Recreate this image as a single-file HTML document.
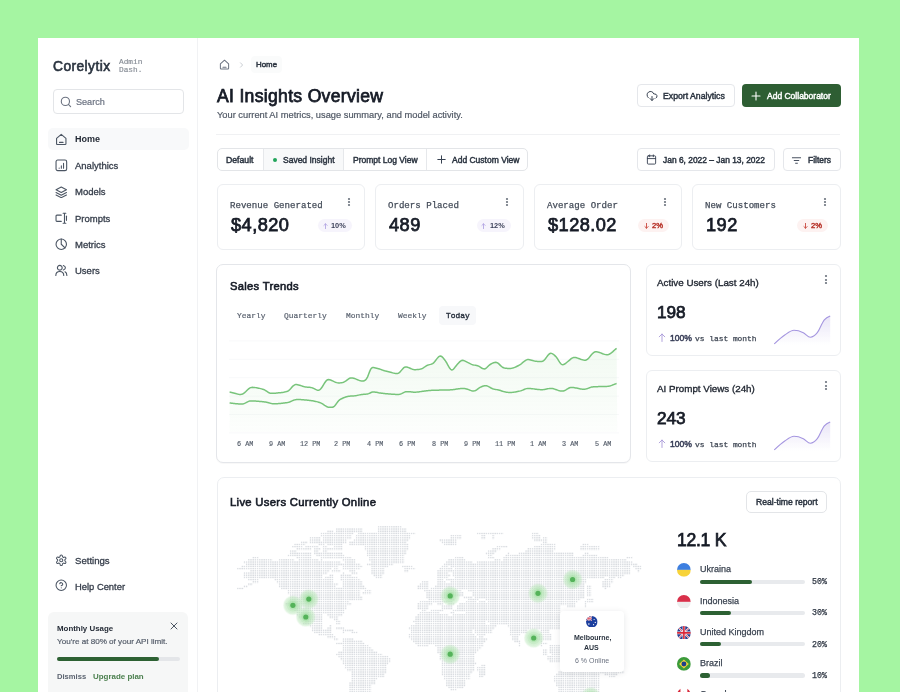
<!DOCTYPE html>
<html><head><meta charset="utf-8">
<style>
*{box-sizing:border-box;margin:0;padding:0}
html,body{width:900px;height:692px;overflow:hidden;background:#a5f5a2;font-family:"Liberation Sans",sans-serif}
.t{position:absolute;white-space:nowrap;line-height:1;will-change:transform}
.r{position:absolute}
svg.i{position:absolute;fill:none;stroke-linecap:round;stroke-linejoin:round}
</style></head>
<body>
<div class="r" style="left:38.00px;top:38.00px;width:821.00px;height:654.00px;background:#ffffff;border-radius:0px;"></div>
<div class="r" style="left:197.00px;top:38.00px;width:1.00px;height:654.00px;background:#f1f2f4;border-radius:0px;"></div>
<div class="t" style="left:52.70px;top:59.53px;font-size:13.8px;font-weight:normal;color:#2b3440;font-family:'Liberation Sans',sans-serif;-webkit-text-stroke:0.75px #2b3440;-webkit-text-stroke:0.6px #2b3440;letter-spacing:0.42px">Corelytix</div>
<div class="t" style="left:119px;top:57.8px;font-size:7.8px;line-height:8.0px;color:#868c95;-webkit-text-stroke:0.15px #868c95;font-family:'Liberation Mono',monospace">Admin<br>Dash.</div>
<div class="r" style="left:52.50px;top:88.50px;width:131.00px;height:25.00px;background:#fff;border:1px solid #e3e5e8;border-radius:4px;"></div>
<svg class="i" style="left:60px;top:96px" width="12" height="12" viewBox="0 0 12 12" stroke="#6b7280" stroke-width="1.1"><circle cx="5.4" cy="5.4" r="4.1"/><path d="M8.4 8.4 L10.6 10.6"/></svg>
<div class="t" style="left:76.40px;top:97.60px;font-size:9.1px;font-weight:normal;color:#6b7280;font-family:'Liberation Sans',sans-serif;-webkit-text-stroke:0.2px #6b7280">Search</div>
<div class="r" style="left:47.50px;top:128.00px;width:141.00px;height:22.00px;background:#f8f9fa;border-radius:5px;"></div>
<svg class="i" style="left:55.3px;top:133.0px" width="12.5" height="12.5" viewBox="0 0 12 12" stroke="#4b5563" stroke-width="1.05"><path d="M1.5 5.2 L6 1.3 L10.5 5.2 V10.2 Q10.5 11 9.7 11 H2.3 Q1.5 11 1.5 10.2 Z"/><path d="M4.3 9 H7.7"/></svg>
<div class="t" style="left:75.20px;top:135.04px;font-size:9.0px;font-weight:bold;color:#232a35;font-family:'Liberation Sans',sans-serif;">Home</div>
<svg class="i" style="left:55.3px;top:159.3px" width="12.5" height="12.5" viewBox="0 0 12 12" stroke="#4b5563" stroke-width="1.05"><rect x="1" y="1" width="10.2" height="10.2" rx="1.6"/><path d="M4 8.8 V8.6 M6.1 8.8 V6.6 M8.2 8.8 V4.2"/></svg>
<div class="t" style="left:75.20px;top:161.12px;font-size:9.5px;font-weight:normal;color:#353d4a;font-family:'Liberation Sans',sans-serif;-webkit-text-stroke:0.3px #353d4a">Analythics</div>
<svg class="i" style="left:55.3px;top:185.5px" width="12.5" height="12.5" viewBox="0 0 12 12" stroke="#4b5563" stroke-width="1.05"><path d="M6 1 L11 3.6 L6 6.2 L1 3.6 Z"/><path d="M1 6.2 L6 8.8 L11 6.2"/><path d="M1 8.6 L6 11.2 L11 8.6"/></svg>
<div class="t" style="left:75.20px;top:187.32px;font-size:9.5px;font-weight:normal;color:#353d4a;font-family:'Liberation Sans',sans-serif;-webkit-text-stroke:0.3px #353d4a">Models</div>
<svg class="i" style="left:55.3px;top:211.8px" width="12.5" height="12.5" viewBox="0 0 12 12" stroke="#4b5563" stroke-width="1.05"><path d="M6 3 H1.8 Q1 3 1 3.8 V8.2 Q1 9 1.8 9 H6"/><path d="M7.8 1.2 H10.4 M9.1 1.2 V10.8 M7.8 10.8 H10.4"/><path d="M11 4 V8"/></svg>
<div class="t" style="left:75.20px;top:213.62px;font-size:9.5px;font-weight:normal;color:#353d4a;font-family:'Liberation Sans',sans-serif;-webkit-text-stroke:0.3px #353d4a">Prompts</div>
<svg class="i" style="left:55.3px;top:238.0px" width="12.5" height="12.5" viewBox="0 0 12 12" stroke="#4b5563" stroke-width="1.05"><circle cx="6" cy="6" r="5"/><path d="M6 1 V6 L9.6 9.5"/></svg>
<div class="t" style="left:75.20px;top:239.82px;font-size:9.5px;font-weight:normal;color:#353d4a;font-family:'Liberation Sans',sans-serif;-webkit-text-stroke:0.3px #353d4a">Metrics</div>
<svg class="i" style="left:55.3px;top:264.3px" width="12.5" height="12.5" viewBox="0 0 12 12" stroke="#4b5563" stroke-width="1.05"><circle cx="4.6" cy="3.6" r="2.3"/><path d="M0.8 11 Q0.8 7.2 4.6 7.2 Q8.4 7.2 8.4 11"/><path d="M8 1.4 Q10 2.2 10 3.6 Q10 5 8 5.8"/><path d="M9.6 7.4 Q11.4 8.3 11.4 11"/></svg>
<div class="t" style="left:75.20px;top:266.12px;font-size:9.5px;font-weight:normal;color:#353d4a;font-family:'Liberation Sans',sans-serif;-webkit-text-stroke:0.3px #353d4a">Users</div>
<svg class="i" style="left:55px;top:554.2px" width="12.5" height="12.5" viewBox="0 0 24 24" stroke="#4b5563" stroke-width="2"><path d="M12.22 2h-.44a2 2 0 0 0-2 2v.18a2 2 0 0 1-1 1.73l-.43.25a2 2 0 0 1-2 0l-.15-.08a2 2 0 0 0-2.73.73l-.22.38a2 2 0 0 0 .73 2.73l.15.1a2 2 0 0 1 1 1.72v.51a2 2 0 0 1-1 1.74l-.15.09a2 2 0 0 0-.73 2.73l.22.38a2 2 0 0 0 2.73.73l.15-.08a2 2 0 0 1 2 0l.43.25a2 2 0 0 1 1 1.73V20a2 2 0 0 0 2 2h.44a2 2 0 0 0 2-2v-.18a2 2 0 0 1 1-1.73l.43-.25a2 2 0 0 1 2 0l.15.08a2 2 0 0 0 2.73-.73l.22-.39a2 2 0 0 0-.73-2.73l-.15-.08a2 2 0 0 1-1-1.74v-.5a2 2 0 0 1 1-1.74l.15-.09a2 2 0 0 0 .73-2.73l-.22-.38a2 2 0 0 0-2.73-.73l-.15.08a2 2 0 0 1-2 0l-.43-.25a2 2 0 0 1-1-1.73V4a2 2 0 0 0-2-2z"/><circle cx="12" cy="12" r="3"/></svg>
<div class="t" style="left:75.20px;top:556.18px;font-size:9.6px;font-weight:normal;color:#353d4a;font-family:'Liberation Sans',sans-serif;-webkit-text-stroke:0.3px #353d4a">Settings</div>
<svg class="i" style="left:55px;top:579.4px" width="12.5" height="12.5" viewBox="0 0 24 24" stroke="#4b5563" stroke-width="2"><circle cx="12" cy="12" r="10"/><path d="M9.09 9a3 3 0 0 1 5.83 1c0 2-3 3-3 3"/><path d="M12 17h.01"/></svg>
<div class="t" style="left:75.20px;top:581.56px;font-size:9.4px;font-weight:normal;color:#353d4a;font-family:'Liberation Sans',sans-serif;-webkit-text-stroke:0.3px #353d4a">Help Center</div>
<div class="r" style="left:48.00px;top:611.50px;width:140.00px;height:88.50px;background:#f6f7f7;border-radius:6px;"></div>
<div class="t" style="left:57.00px;top:624.52px;font-size:7.9px;font-weight:bold;color:#262d38;font-family:'Liberation Sans',sans-serif;">Monthly Usage</div>
<svg class="i" style="left:170px;top:622px" width="8" height="8" viewBox="0 0 8 8" stroke="#4b5563" stroke-width="1"><path d="M1 1 L7 7 M7 1 L1 7"/></svg>
<div class="t" style="left:57.00px;top:638.44px;font-size:8.1px;font-weight:normal;color:#555d6a;font-family:'Liberation Sans',sans-serif;-webkit-text-stroke:0.2px #555d6a">You're at 80% of your API limit.</div>
<div class="r" style="left:57.00px;top:656.60px;width:122.50px;height:4.20px;background:#e4e6e9;border-radius:3px;"></div>
<div class="r" style="left:57.00px;top:656.60px;width:102.00px;height:4.20px;background:#2d6133;border-radius:3px;"></div>
<div class="t" style="left:57.00px;top:673.06px;font-size:7.6px;font-weight:bold;color:#5b6370;font-family:'Liberation Sans',sans-serif;">Dismiss</div>
<div class="t" style="left:93.30px;top:672.90px;font-size:7.95px;font-weight:bold;color:#4b7f4e;font-family:'Liberation Sans',sans-serif;">Upgrade plan</div>
<svg class="i" style="left:218.5px;top:58.5px" width="11" height="11" viewBox="0 0 12 12" stroke="#6b7280" stroke-width="1.1"><path d="M1.5 5.2 L6 1.3 L10.5 5.2 V10.2 Q10.5 11 9.7 11 H2.3 Q1.5 11 1.5 10.2 Z"/><path d="M4.3 9 H7.7"/></svg>
<svg class="i" style="left:239px;top:61.5px" width="5" height="6" viewBox="0 0 5 6" stroke="#c4c8ce" stroke-width="0.9"><path d="M1.5 0.8 L3.6 3 L1.5 5.2"/></svg>
<div class="r" style="left:250.50px;top:56.00px;width:31.00px;height:17.00px;background:#fafbfb;border-radius:4px;"></div>
<div class="t" style="left:255.60px;top:60.92px;font-size:7.9px;font-weight:normal;color:#2b3440;font-family:'Liberation Sans',sans-serif;-webkit-text-stroke:0.45px #2b3440;">Home</div>
<div class="t" style="left:216.60px;top:87.56px;font-size:17.6px;font-weight:normal;color:#161b26;font-family:'Liberation Sans',sans-serif;-webkit-text-stroke:0.75px #161b26;letter-spacing:0.3px">AI Insights Overview</div>
<div class="t" style="left:216.60px;top:110.51px;font-size:9.3px;font-weight:normal;color:#505865;font-family:'Liberation Sans',sans-serif;-webkit-text-stroke:0.2px #505865">Your current AI metrics, usage summary, and model activity.</div>
<div class="r" style="left:216.00px;top:133.50px;width:624.00px;height:1.00px;background:#f0f1f3;border-radius:0px;"></div>
<div class="r" style="left:637.30px;top:84.30px;width:97.30px;height:22.50px;background:#fff;border:1px solid #e5e7eb;border-radius:4px;"></div>
<svg class="i" style="left:646px;top:89.5px" width="12" height="12" viewBox="0 0 24 24" stroke="#374151" stroke-width="2"><path d="M12 13v8l-4-4"/><path d="m12 21 4-4"/><path d="M4.393 15.269A7 7 0 1 1 15.71 8h1.79a4.5 4.5 0 0 1 2.436 8.284"/></svg>
<div class="t" style="left:662.50px;top:91.67px;font-size:8.7px;font-weight:normal;color:#2b3440;font-family:'Liberation Sans',sans-serif;-webkit-text-stroke:0.45px #2b3440;">Export Analytics</div>
<div class="r" style="left:741.70px;top:84.30px;width:99.10px;height:22.50px;background:#2e5e33;border-radius:4px;"></div>
<svg class="i" style="left:751px;top:90.5px" width="10" height="10" viewBox="0 0 10 10" stroke="#ffffff" stroke-width="1.1"><path d="M5 1 V9 M1 5 H9"/></svg>
<div class="t" style="left:767.00px;top:91.76px;font-size:8.5px;font-weight:normal;color:#ffffff;font-family:'Liberation Sans',sans-serif;-webkit-text-stroke:0.45px #ffffff;">Add Collaborator</div>
<div class="r" style="left:216.60px;top:148.40px;width:311.90px;height:22.60px;background:#fff;border:1px solid #e3e5e8;border-radius:5px;overflow:hidden"></div>
<div class="r" style="left:263.00px;top:149.40px;width:80.40px;height:20.60px;background:#f8f9fa;border-radius:0px;"></div>
<div class="r" style="left:263.00px;top:149.40px;width:1.00px;height:20.60px;background:#e6e8eb;border-radius:0px;"></div>
<div class="r" style="left:343.40px;top:149.40px;width:1.00px;height:20.60px;background:#e6e8eb;border-radius:0px;"></div>
<div class="r" style="left:426.30px;top:149.40px;width:1.00px;height:20.60px;background:#e6e8eb;border-radius:0px;"></div>
<div class="t" style="left:225.60px;top:155.77px;font-size:8.7px;font-weight:normal;color:#2b3440;font-family:'Liberation Sans',sans-serif;-webkit-text-stroke:0.45px #2b3440;">Default</div>
<div class="r" style="left:272.80px;top:157.50px;width:4.00px;height:4.00px;background:#22a55a;border-radius:2px;"></div>
<div class="t" style="left:282.50px;top:155.86px;font-size:8.5px;font-weight:normal;color:#2b3440;font-family:'Liberation Sans',sans-serif;-webkit-text-stroke:0.45px #2b3440;">Saved Insight</div>
<div class="t" style="left:352.90px;top:155.86px;font-size:8.5px;font-weight:normal;color:#2b3440;font-family:'Liberation Sans',sans-serif;-webkit-text-stroke:0.45px #2b3440;">Prompt Log View</div>
<svg class="i" style="left:436.5px;top:155px" width="9" height="9" viewBox="0 0 9 9" stroke="#374151" stroke-width="1"><path d="M4.5 0.8 V8.2 M0.8 4.5 H8.2"/></svg>
<div class="t" style="left:451.70px;top:155.86px;font-size:8.5px;font-weight:normal;color:#2b3440;font-family:'Liberation Sans',sans-serif;-webkit-text-stroke:0.45px #2b3440;">Add Custom View</div>
<div class="r" style="left:637.30px;top:148.30px;width:137.70px;height:22.50px;background:#fff;border:1px solid #e5e7eb;border-radius:4px;"></div>
<svg class="i" style="left:646px;top:153.8px" width="11" height="11" viewBox="0 0 24 24" stroke="#374151" stroke-width="2"><rect x="3" y="4" width="18" height="18" rx="2"/><path d="M16 2v4M8 2v4M3 10h18"/></svg>
<div class="t" style="left:663.00px;top:155.90px;font-size:8.42px;font-weight:normal;color:#2b3440;font-family:'Liberation Sans',sans-serif;-webkit-text-stroke:0.45px #2b3440;">Jan 6, 2022 – Jan 13, 2022</div>
<div class="r" style="left:782.80px;top:148.30px;width:58.00px;height:22.50px;background:#fff;border:1px solid #e5e7eb;border-radius:4px;"></div>
<svg class="i" style="left:791px;top:154.5px" width="11" height="11" viewBox="0 0 24 24" stroke="#374151" stroke-width="2"><path d="M3 6h18M7 12h10M10 18h4"/></svg>
<div class="t" style="left:807.70px;top:155.88px;font-size:8.45px;font-weight:normal;color:#2b3440;font-family:'Liberation Sans',sans-serif;-webkit-text-stroke:0.45px #2b3440;">Filters</div>
<div class="r" style="left:216.60px;top:184.40px;width:148.40px;height:65.60px;background:#fff;border:1px solid #eceef1;border-radius:6px;"></div>
<div class="t" style="left:230.00px;top:200.60px;font-size:9.1px;font-weight:normal;color:#444c59;font-family:'Liberation Mono',monospace;-webkit-text-stroke:0.25px #444c59">Revenue Generated</div>
<div class="t" style="left:230.70px;top:216.09px;font-size:18.2px;font-weight:normal;color:#161b26;font-family:'Liberation Sans',sans-serif;-webkit-text-stroke:0.75px #161b26;letter-spacing:0.45px">$4,820</div>
<svg class="r" style="left:346.80px;top:196.50px" width="4" height="4" viewBox="0 0 4 4"><circle cx="2" cy="2" r="1.1" fill="#6b727d"/></svg>
<svg class="r" style="left:346.80px;top:199.95px" width="4" height="4" viewBox="0 0 4 4"><circle cx="2" cy="2" r="1.1" fill="#6b727d"/></svg>
<svg class="r" style="left:346.80px;top:203.40px" width="4" height="4" viewBox="0 0 4 4"><circle cx="2" cy="2" r="1.1" fill="#6b727d"/></svg>
<div class="r" style="left:318.00px;top:219.00px;width:34.00px;height:13.00px;background:#f6f4fc;border-radius:7px;"></div>
<svg class="i" style="left:322.5px;top:222.5px" width="5" height="6" viewBox="0 0 5 6" stroke="#b3a6e3" stroke-width="0.9"><path d="M2.5 5.6 V0.8 M0.9 2.4 L2.5 0.8 L4.1 2.4"/></svg>
<div class="t" style="left:331.20px;top:222.34px;font-size:7.4px;font-weight:bold;color:#3a3f58;font-family:'Liberation Sans',sans-serif;">10%</div>
<div class="r" style="left:375.00px;top:184.40px;width:148.50px;height:65.60px;background:#fff;border:1px solid #eceef1;border-radius:6px;"></div>
<div class="t" style="left:388.40px;top:200.60px;font-size:9.1px;font-weight:normal;color:#444c59;font-family:'Liberation Mono',monospace;-webkit-text-stroke:0.25px #444c59">Orders Placed</div>
<div class="t" style="left:389.10px;top:216.09px;font-size:18.2px;font-weight:normal;color:#161b26;font-family:'Liberation Sans',sans-serif;-webkit-text-stroke:0.75px #161b26;letter-spacing:0.45px">489</div>
<svg class="r" style="left:505.30px;top:196.50px" width="4" height="4" viewBox="0 0 4 4"><circle cx="2" cy="2" r="1.1" fill="#6b727d"/></svg>
<svg class="r" style="left:505.30px;top:199.95px" width="4" height="4" viewBox="0 0 4 4"><circle cx="2" cy="2" r="1.1" fill="#6b727d"/></svg>
<svg class="r" style="left:505.30px;top:203.40px" width="4" height="4" viewBox="0 0 4 4"><circle cx="2" cy="2" r="1.1" fill="#6b727d"/></svg>
<div class="r" style="left:476.50px;top:219.00px;width:34.00px;height:13.00px;background:#f6f4fc;border-radius:7px;"></div>
<svg class="i" style="left:481.0px;top:222.5px" width="5" height="6" viewBox="0 0 5 6" stroke="#b3a6e3" stroke-width="0.9"><path d="M2.5 5.6 V0.8 M0.9 2.4 L2.5 0.8 L4.1 2.4"/></svg>
<div class="t" style="left:489.70px;top:222.34px;font-size:7.4px;font-weight:bold;color:#3a3f58;font-family:'Liberation Sans',sans-serif;">12%</div>
<div class="r" style="left:533.50px;top:184.40px;width:148.00px;height:65.60px;background:#fff;border:1px solid #eceef1;border-radius:6px;"></div>
<div class="t" style="left:546.90px;top:200.60px;font-size:9.1px;font-weight:normal;color:#444c59;font-family:'Liberation Mono',monospace;-webkit-text-stroke:0.25px #444c59">Average Order</div>
<div class="t" style="left:547.60px;top:216.09px;font-size:18.2px;font-weight:normal;color:#161b26;font-family:'Liberation Sans',sans-serif;-webkit-text-stroke:0.75px #161b26;letter-spacing:0.45px">$128.02</div>
<svg class="r" style="left:663.30px;top:196.50px" width="4" height="4" viewBox="0 0 4 4"><circle cx="2" cy="2" r="1.1" fill="#6b727d"/></svg>
<svg class="r" style="left:663.30px;top:199.95px" width="4" height="4" viewBox="0 0 4 4"><circle cx="2" cy="2" r="1.1" fill="#6b727d"/></svg>
<svg class="r" style="left:663.30px;top:203.40px" width="4" height="4" viewBox="0 0 4 4"><circle cx="2" cy="2" r="1.1" fill="#6b727d"/></svg>
<div class="r" style="left:638.00px;top:219.00px;width:30.50px;height:13.00px;background:#fdf2f1;border-radius:7px;"></div>
<svg class="i" style="left:643.7px;top:222.5px" width="5" height="6" viewBox="0 0 5 6" stroke="#c9473d" stroke-width="0.9"><path d="M2.5 0.4 V5.2 M0.9 3.6 L2.5 5.2 L4.1 3.6"/></svg>
<div class="t" style="left:651.70px;top:222.26px;font-size:7.6px;font-weight:normal;color:#b9382f;font-family:'Liberation Sans',sans-serif;-webkit-text-stroke:0.45px #b9382f;">2%</div>
<div class="r" style="left:691.50px;top:184.40px;width:149.30px;height:65.60px;background:#fff;border:1px solid #eceef1;border-radius:6px;"></div>
<div class="t" style="left:704.90px;top:200.60px;font-size:9.1px;font-weight:normal;color:#444c59;font-family:'Liberation Mono',monospace;-webkit-text-stroke:0.25px #444c59">New Customers</div>
<div class="t" style="left:705.60px;top:216.09px;font-size:18.2px;font-weight:normal;color:#161b26;font-family:'Liberation Sans',sans-serif;-webkit-text-stroke:0.75px #161b26;letter-spacing:0.45px">192</div>
<svg class="r" style="left:822.60px;top:196.50px" width="4" height="4" viewBox="0 0 4 4"><circle cx="2" cy="2" r="1.1" fill="#6b727d"/></svg>
<svg class="r" style="left:822.60px;top:199.95px" width="4" height="4" viewBox="0 0 4 4"><circle cx="2" cy="2" r="1.1" fill="#6b727d"/></svg>
<svg class="r" style="left:822.60px;top:203.40px" width="4" height="4" viewBox="0 0 4 4"><circle cx="2" cy="2" r="1.1" fill="#6b727d"/></svg>
<div class="r" style="left:797.30px;top:219.00px;width:30.50px;height:13.00px;background:#fdf2f1;border-radius:7px;"></div>
<svg class="i" style="left:803.0px;top:222.5px" width="5" height="6" viewBox="0 0 5 6" stroke="#c9473d" stroke-width="0.9"><path d="M2.5 0.4 V5.2 M0.9 3.6 L2.5 5.2 L4.1 3.6"/></svg>
<div class="t" style="left:811.00px;top:222.26px;font-size:7.6px;font-weight:normal;color:#b9382f;font-family:'Liberation Sans',sans-serif;-webkit-text-stroke:0.45px #b9382f;">2%</div>
<div class="r" style="left:216.30px;top:264.20px;width:415.20px;height:198.80px;background:#fff;border:1px solid #e4e6ea;border-radius:7px;box-shadow:0 1px 1px rgba(16,24,40,0.03)"></div>
<div class="t" style="left:230.20px;top:281.47px;font-size:11.2px;font-weight:normal;color:#161b26;font-family:'Liberation Sans',sans-serif;-webkit-text-stroke:0.75px #161b26;-webkit-text-stroke:0.6px #161b26;letter-spacing:0.3px">Sales Trends</div>
<div class="r" style="left:438.70px;top:306.20px;width:37.30px;height:18.70px;background:#f7f8fa;border-radius:4px;"></div>
<div class="t" style="left:237.00px;top:312.42px;font-size:7.9px;font-weight:normal;color:#5b6370;font-family:'Liberation Mono',monospace;-webkit-text-stroke:0.2px #5b6370">Yearly</div>
<div class="t" style="left:284.00px;top:312.42px;font-size:7.9px;font-weight:normal;color:#5b6370;font-family:'Liberation Mono',monospace;-webkit-text-stroke:0.2px #5b6370">Quarterly</div>
<div class="t" style="left:345.70px;top:312.42px;font-size:7.9px;font-weight:normal;color:#5b6370;font-family:'Liberation Mono',monospace;-webkit-text-stroke:0.2px #5b6370">Monthly</div>
<div class="t" style="left:397.60px;top:312.42px;font-size:7.9px;font-weight:normal;color:#5b6370;font-family:'Liberation Mono',monospace;-webkit-text-stroke:0.2px #5b6370">Weekly</div>
<div class="t" style="left:445.50px;top:312.42px;font-size:7.9px;font-weight:normal;color:#2b3340;font-family:'Liberation Mono',monospace;-webkit-text-stroke:0.4px #2b3340">Today</div>
<svg class="r" style="left:0;top:0" width="900" height="692" viewBox="0 0 900 692"><defs><linearGradient id="gf" x1="0" y1="0" x2="0" y2="1"><stop offset="0" stop-color="#7fcf7f" stop-opacity="0.10"/><stop offset="1" stop-color="#7fcf7f" stop-opacity="0.02"/></linearGradient></defs><rect x="229" y="340.4" width="390" height="1" fill="#f8f9fa"/><rect x="229" y="358.8" width="390" height="1" fill="#f8f9fa"/><rect x="229" y="377.2" width="390" height="1" fill="#f8f9fa"/><rect x="229" y="395.6" width="390" height="1" fill="#f8f9fa"/><rect x="229" y="414.0" width="390" height="1" fill="#f8f9fa"/><rect x="229" y="432.4" width="390" height="1" fill="#f8f9fa"/><path d="M229.6,391.98 L230.6,392.16 L231.6,392.42 L232.6,392.70 L233.6,393.00 L234.6,393.29 L235.6,393.57 L236.6,393.83 L237.6,394.06 L238.6,394.25 L239.6,394.38 L240.6,394.44 L241.6,394.36 L242.6,394.03 L243.6,393.44 L244.6,392.64 L245.6,391.70 L246.6,390.70 L247.6,389.71 L248.6,388.82 L249.6,388.09 L250.6,387.61 L251.6,387.38 L252.6,387.34 L253.6,387.40 L254.6,387.49 L255.6,387.62 L256.6,387.78 L257.6,387.96 L258.6,388.17 L259.6,388.39 L260.6,388.63 L261.6,388.88 L262.6,389.16 L263.6,389.49 L264.6,389.94 L265.6,390.53 L266.6,391.20 L267.6,391.87 L268.6,392.48 L269.6,392.96 L270.6,393.25 L271.6,393.36 L272.6,393.36 L273.6,393.32 L274.6,393.25 L275.6,393.17 L276.6,393.08 L277.6,392.98 L278.6,392.87 L279.6,392.77 L280.6,392.65 L281.6,392.53 L282.6,392.39 L283.6,392.24 L284.6,392.05 L285.6,391.84 L286.6,391.59 L287.6,391.22 L288.6,390.61 L289.6,389.73 L290.6,388.65 L291.6,387.50 L292.6,386.40 L293.6,385.49 L294.6,384.87 L295.6,384.61 L296.6,384.61 L297.6,384.75 L298.6,384.96 L299.6,385.24 L300.6,385.54 L301.6,385.86 L302.6,386.18 L303.6,386.48 L304.6,386.73 L305.6,386.93 L306.6,387.07 L307.6,387.18 L308.6,387.27 L309.6,387.36 L310.6,387.47 L311.6,387.63 L312.6,387.92 L313.6,388.34 L314.6,388.87 L315.6,389.43 L316.6,389.92 L317.6,390.26 L318.6,390.31 L319.6,389.94 L320.6,389.08 L321.6,387.80 L322.6,386.25 L323.6,384.58 L324.6,382.96 L325.6,381.52 L326.6,380.43 L327.6,379.80 L328.6,379.63 L329.6,379.75 L330.6,380.05 L331.6,380.45 L332.6,380.91 L333.6,381.40 L334.6,381.87 L335.6,382.30 L336.6,382.64 L337.6,382.87 L338.6,382.95 L339.6,382.93 L340.6,382.82 L341.6,382.67 L342.6,382.47 L343.6,382.18 L344.6,381.71 L345.6,381.07 L346.6,380.33 L347.6,379.57 L348.6,378.86 L349.6,378.31 L350.6,377.98 L351.6,377.88 L352.6,377.98 L353.6,378.21 L354.6,378.53 L355.6,378.91 L356.6,379.33 L357.6,379.76 L358.6,380.17 L359.6,380.54 L360.6,380.84 L361.6,381.05 L362.6,381.11 L363.6,380.95 L364.6,380.53 L365.6,379.83 L366.6,378.68 L367.6,376.81 L368.6,374.30 L369.6,371.63 L370.6,369.38 L371.6,368.02 L372.6,367.55 L373.6,367.56 L374.6,367.73 L375.6,367.95 L376.6,368.20 L377.6,368.46 L378.6,368.73 L379.6,369.04 L380.6,369.38 L381.6,369.74 L382.6,370.10 L383.6,370.44 L384.6,370.76 L385.6,371.04 L386.6,371.31 L387.6,371.57 L388.6,371.81 L389.6,372.05 L390.6,372.31 L391.6,372.58 L392.6,372.85 L393.6,373.11 L394.6,373.34 L395.6,373.52 L396.6,373.62 L397.6,373.55 L398.6,373.17 L399.6,372.40 L400.6,371.34 L401.6,370.13 L402.6,368.93 L403.6,367.92 L404.6,367.23 L405.6,366.94 L406.6,366.98 L407.6,367.22 L408.6,367.58 L409.6,368.00 L410.6,368.45 L411.6,368.88 L412.6,369.25 L413.6,369.51 L414.6,369.64 L415.6,369.67 L416.6,369.62 L417.6,369.54 L418.6,369.42 L419.6,369.28 L420.6,369.09 L421.6,368.79 L422.6,368.32 L423.6,367.70 L424.6,367.00 L425.6,366.30 L426.6,365.68 L427.6,365.20 L428.6,364.86 L429.6,364.61 L430.6,364.38 L431.6,364.08 L432.6,363.61 L433.6,362.84 L434.6,361.77 L435.6,360.48 L436.6,359.14 L437.6,357.88 L438.6,356.85 L439.6,356.20 L440.6,356.06 L441.6,356.48 L442.6,357.36 L443.6,358.52 L444.6,359.79 L445.6,361.17 L446.6,362.75 L447.6,364.54 L448.6,366.36 L449.6,368.01 L450.6,369.26 L451.6,369.91 L452.6,369.81 L453.6,369.02 L454.6,367.77 L455.6,366.41 L456.6,365.16 L457.6,364.03 L458.6,362.94 L459.6,361.92 L460.6,361.07 L461.6,360.52 L462.6,360.34 L463.6,360.47 L464.6,360.83 L465.6,361.31 L466.6,361.85 L467.6,362.39 L468.6,362.89 L469.6,363.40 L470.6,363.89 L471.6,364.34 L472.6,364.70 L473.6,364.95 L474.6,365.12 L475.6,365.28 L476.6,365.46 L477.6,365.73 L478.6,366.15 L479.6,366.71 L480.6,367.36 L481.6,368.00 L482.6,368.53 L483.6,368.87 L484.6,368.90 L485.6,368.52 L486.6,367.76 L487.6,366.79 L488.6,365.79 L489.6,364.93 L490.6,364.26 L491.6,363.69 L492.6,363.18 L493.6,362.75 L494.6,362.44 L495.6,362.32 L496.6,362.46 L497.6,362.93 L498.6,363.69 L499.6,364.62 L500.6,365.60 L501.6,366.53 L502.6,367.29 L503.6,367.79 L504.6,368.05 L505.6,368.20 L506.6,368.31 L507.6,368.40 L508.6,368.45 L509.6,368.48 L510.6,368.43 L511.6,368.30 L512.6,368.07 L513.6,367.76 L514.6,367.37 L515.6,366.94 L516.6,366.48 L517.6,366.01 L518.6,365.52 L519.6,364.97 L520.6,364.29 L521.6,363.50 L522.6,362.64 L523.6,361.79 L524.6,361.00 L525.6,360.34 L526.6,359.86 L527.6,359.61 L528.6,359.59 L529.6,359.72 L530.6,359.94 L531.6,360.22 L532.6,360.51 L533.6,360.79 L534.6,361.02 L535.6,361.18 L536.6,361.29 L537.6,361.38 L538.6,361.46 L539.6,361.52 L540.6,361.56 L541.6,361.53 L542.6,361.27 L543.6,360.65 L544.6,359.66 L545.6,358.43 L546.6,357.08 L547.6,355.76 L548.6,354.60 L549.6,353.76 L550.6,353.33 L551.6,353.37 L552.6,353.80 L553.6,354.51 L554.6,355.39 L555.6,356.37 L556.6,357.50 L557.6,358.91 L558.6,360.53 L559.6,362.15 L560.6,363.54 L561.6,364.45 L562.6,364.77 L563.6,364.56 L564.6,364.01 L565.6,363.28 L566.6,362.49 L567.6,361.72 L568.6,360.92 L569.6,360.06 L570.6,359.20 L571.6,358.43 L572.6,357.85 L573.6,357.54 L574.6,357.49 L575.6,357.61 L576.6,357.83 L577.6,358.13 L578.6,358.47 L579.6,358.83 L580.6,359.20 L581.6,359.54 L582.6,359.84 L583.6,360.07 L584.6,360.20 L585.6,360.16 L586.6,359.82 L587.6,359.15 L588.6,358.19 L589.6,357.05 L590.6,355.83 L591.6,354.61 L592.6,353.50 L593.6,352.59 L594.6,351.99 L595.6,351.72 L596.6,351.72 L597.6,351.89 L598.6,352.17 L599.6,352.51 L600.6,352.90 L601.6,353.30 L602.6,353.70 L603.6,354.07 L604.6,354.38 L605.6,354.61 L606.6,354.72 L607.6,354.68 L608.6,354.44 L609.6,353.99 L610.6,353.38 L611.6,352.64 L612.6,351.81 L613.6,350.92 L614.6,350.02 L615.6,349.16 L616.6,348.45 L617.3,432 L229.6,432 Z" fill="url(#gf)"/><path d="M229.6,391.98 L230.6,392.16 L231.6,392.42 L232.6,392.70 L233.6,393.00 L234.6,393.29 L235.6,393.57 L236.6,393.83 L237.6,394.06 L238.6,394.25 L239.6,394.38 L240.6,394.44 L241.6,394.36 L242.6,394.03 L243.6,393.44 L244.6,392.64 L245.6,391.70 L246.6,390.70 L247.6,389.71 L248.6,388.82 L249.6,388.09 L250.6,387.61 L251.6,387.38 L252.6,387.34 L253.6,387.40 L254.6,387.49 L255.6,387.62 L256.6,387.78 L257.6,387.96 L258.6,388.17 L259.6,388.39 L260.6,388.63 L261.6,388.88 L262.6,389.16 L263.6,389.49 L264.6,389.94 L265.6,390.53 L266.6,391.20 L267.6,391.87 L268.6,392.48 L269.6,392.96 L270.6,393.25 L271.6,393.36 L272.6,393.36 L273.6,393.32 L274.6,393.25 L275.6,393.17 L276.6,393.08 L277.6,392.98 L278.6,392.87 L279.6,392.77 L280.6,392.65 L281.6,392.53 L282.6,392.39 L283.6,392.24 L284.6,392.05 L285.6,391.84 L286.6,391.59 L287.6,391.22 L288.6,390.61 L289.6,389.73 L290.6,388.65 L291.6,387.50 L292.6,386.40 L293.6,385.49 L294.6,384.87 L295.6,384.61 L296.6,384.61 L297.6,384.75 L298.6,384.96 L299.6,385.24 L300.6,385.54 L301.6,385.86 L302.6,386.18 L303.6,386.48 L304.6,386.73 L305.6,386.93 L306.6,387.07 L307.6,387.18 L308.6,387.27 L309.6,387.36 L310.6,387.47 L311.6,387.63 L312.6,387.92 L313.6,388.34 L314.6,388.87 L315.6,389.43 L316.6,389.92 L317.6,390.26 L318.6,390.31 L319.6,389.94 L320.6,389.08 L321.6,387.80 L322.6,386.25 L323.6,384.58 L324.6,382.96 L325.6,381.52 L326.6,380.43 L327.6,379.80 L328.6,379.63 L329.6,379.75 L330.6,380.05 L331.6,380.45 L332.6,380.91 L333.6,381.40 L334.6,381.87 L335.6,382.30 L336.6,382.64 L337.6,382.87 L338.6,382.95 L339.6,382.93 L340.6,382.82 L341.6,382.67 L342.6,382.47 L343.6,382.18 L344.6,381.71 L345.6,381.07 L346.6,380.33 L347.6,379.57 L348.6,378.86 L349.6,378.31 L350.6,377.98 L351.6,377.88 L352.6,377.98 L353.6,378.21 L354.6,378.53 L355.6,378.91 L356.6,379.33 L357.6,379.76 L358.6,380.17 L359.6,380.54 L360.6,380.84 L361.6,381.05 L362.6,381.11 L363.6,380.95 L364.6,380.53 L365.6,379.83 L366.6,378.68 L367.6,376.81 L368.6,374.30 L369.6,371.63 L370.6,369.38 L371.6,368.02 L372.6,367.55 L373.6,367.56 L374.6,367.73 L375.6,367.95 L376.6,368.20 L377.6,368.46 L378.6,368.73 L379.6,369.04 L380.6,369.38 L381.6,369.74 L382.6,370.10 L383.6,370.44 L384.6,370.76 L385.6,371.04 L386.6,371.31 L387.6,371.57 L388.6,371.81 L389.6,372.05 L390.6,372.31 L391.6,372.58 L392.6,372.85 L393.6,373.11 L394.6,373.34 L395.6,373.52 L396.6,373.62 L397.6,373.55 L398.6,373.17 L399.6,372.40 L400.6,371.34 L401.6,370.13 L402.6,368.93 L403.6,367.92 L404.6,367.23 L405.6,366.94 L406.6,366.98 L407.6,367.22 L408.6,367.58 L409.6,368.00 L410.6,368.45 L411.6,368.88 L412.6,369.25 L413.6,369.51 L414.6,369.64 L415.6,369.67 L416.6,369.62 L417.6,369.54 L418.6,369.42 L419.6,369.28 L420.6,369.09 L421.6,368.79 L422.6,368.32 L423.6,367.70 L424.6,367.00 L425.6,366.30 L426.6,365.68 L427.6,365.20 L428.6,364.86 L429.6,364.61 L430.6,364.38 L431.6,364.08 L432.6,363.61 L433.6,362.84 L434.6,361.77 L435.6,360.48 L436.6,359.14 L437.6,357.88 L438.6,356.85 L439.6,356.20 L440.6,356.06 L441.6,356.48 L442.6,357.36 L443.6,358.52 L444.6,359.79 L445.6,361.17 L446.6,362.75 L447.6,364.54 L448.6,366.36 L449.6,368.01 L450.6,369.26 L451.6,369.91 L452.6,369.81 L453.6,369.02 L454.6,367.77 L455.6,366.41 L456.6,365.16 L457.6,364.03 L458.6,362.94 L459.6,361.92 L460.6,361.07 L461.6,360.52 L462.6,360.34 L463.6,360.47 L464.6,360.83 L465.6,361.31 L466.6,361.85 L467.6,362.39 L468.6,362.89 L469.6,363.40 L470.6,363.89 L471.6,364.34 L472.6,364.70 L473.6,364.95 L474.6,365.12 L475.6,365.28 L476.6,365.46 L477.6,365.73 L478.6,366.15 L479.6,366.71 L480.6,367.36 L481.6,368.00 L482.6,368.53 L483.6,368.87 L484.6,368.90 L485.6,368.52 L486.6,367.76 L487.6,366.79 L488.6,365.79 L489.6,364.93 L490.6,364.26 L491.6,363.69 L492.6,363.18 L493.6,362.75 L494.6,362.44 L495.6,362.32 L496.6,362.46 L497.6,362.93 L498.6,363.69 L499.6,364.62 L500.6,365.60 L501.6,366.53 L502.6,367.29 L503.6,367.79 L504.6,368.05 L505.6,368.20 L506.6,368.31 L507.6,368.40 L508.6,368.45 L509.6,368.48 L510.6,368.43 L511.6,368.30 L512.6,368.07 L513.6,367.76 L514.6,367.37 L515.6,366.94 L516.6,366.48 L517.6,366.01 L518.6,365.52 L519.6,364.97 L520.6,364.29 L521.6,363.50 L522.6,362.64 L523.6,361.79 L524.6,361.00 L525.6,360.34 L526.6,359.86 L527.6,359.61 L528.6,359.59 L529.6,359.72 L530.6,359.94 L531.6,360.22 L532.6,360.51 L533.6,360.79 L534.6,361.02 L535.6,361.18 L536.6,361.29 L537.6,361.38 L538.6,361.46 L539.6,361.52 L540.6,361.56 L541.6,361.53 L542.6,361.27 L543.6,360.65 L544.6,359.66 L545.6,358.43 L546.6,357.08 L547.6,355.76 L548.6,354.60 L549.6,353.76 L550.6,353.33 L551.6,353.37 L552.6,353.80 L553.6,354.51 L554.6,355.39 L555.6,356.37 L556.6,357.50 L557.6,358.91 L558.6,360.53 L559.6,362.15 L560.6,363.54 L561.6,364.45 L562.6,364.77 L563.6,364.56 L564.6,364.01 L565.6,363.28 L566.6,362.49 L567.6,361.72 L568.6,360.92 L569.6,360.06 L570.6,359.20 L571.6,358.43 L572.6,357.85 L573.6,357.54 L574.6,357.49 L575.6,357.61 L576.6,357.83 L577.6,358.13 L578.6,358.47 L579.6,358.83 L580.6,359.20 L581.6,359.54 L582.6,359.84 L583.6,360.07 L584.6,360.20 L585.6,360.16 L586.6,359.82 L587.6,359.15 L588.6,358.19 L589.6,357.05 L590.6,355.83 L591.6,354.61 L592.6,353.50 L593.6,352.59 L594.6,351.99 L595.6,351.72 L596.6,351.72 L597.6,351.89 L598.6,352.17 L599.6,352.51 L600.6,352.90 L601.6,353.30 L602.6,353.70 L603.6,354.07 L604.6,354.38 L605.6,354.61 L606.6,354.72 L607.6,354.68 L608.6,354.44 L609.6,353.99 L610.6,353.38 L611.6,352.64 L612.6,351.81 L613.6,350.92 L614.6,350.02 L615.6,349.16 L616.6,348.45" fill="none" stroke="#78c47b" stroke-width="1.5"/><path d="M229.6,403.03 L230.6,403.10 L231.6,403.20 L232.6,403.31 L233.6,403.42 L234.6,403.54 L235.6,403.65 L236.6,403.75 L237.6,403.85 L238.6,403.93 L239.6,404.00 L240.6,404.05 L241.6,404.07 L242.6,404.01 L243.6,403.80 L244.6,403.42 L245.6,402.92 L246.6,402.36 L247.6,401.82 L248.6,401.37 L249.6,401.07 L250.6,400.94 L251.6,400.92 L252.6,400.94 L253.6,400.97 L254.6,401.01 L255.6,401.07 L256.6,401.13 L257.6,401.21 L258.6,401.29 L259.6,401.38 L260.6,401.47 L261.6,401.57 L262.6,401.68 L263.6,401.79 L264.6,401.90 L265.6,402.03 L266.6,402.21 L267.6,402.45 L268.6,402.73 L269.6,403.03 L270.6,403.30 L271.6,403.54 L272.6,403.70 L273.6,403.77 L274.6,403.78 L275.6,403.76 L276.6,403.72 L277.6,403.67 L278.6,403.60 L279.6,403.52 L280.6,403.43 L281.6,403.33 L282.6,403.22 L283.6,403.11 L284.6,402.98 L285.6,402.85 L286.6,402.71 L287.6,402.53 L288.6,402.29 L289.6,401.95 L290.6,401.54 L291.6,401.09 L292.6,400.65 L293.6,400.23 L294.6,399.89 L295.6,399.66 L296.6,399.54 L297.6,399.52 L298.6,399.53 L299.6,399.57 L300.6,399.61 L301.6,399.67 L302.6,399.74 L303.6,399.82 L304.6,399.91 L305.6,400.01 L306.6,400.11 L307.6,400.23 L308.6,400.34 L309.6,400.47 L310.6,400.60 L311.6,400.73 L312.6,400.86 L313.6,401.02 L314.6,401.19 L315.6,401.40 L316.6,401.63 L317.6,401.89 L318.6,402.18 L319.6,402.49 L320.6,402.88 L321.6,403.37 L322.6,403.97 L323.6,404.63 L324.6,405.31 L325.6,405.95 L326.6,406.50 L327.6,406.92 L328.6,407.18 L329.6,407.28 L330.6,407.30 L331.6,407.29 L332.6,407.19 L333.6,406.80 L334.6,405.98 L335.6,404.79 L336.6,403.39 L337.6,402.00 L338.6,400.79 L339.6,399.88 L340.6,399.24 L341.6,398.71 L342.6,398.23 L343.6,397.80 L344.6,397.42 L345.6,397.08 L346.6,396.79 L347.6,396.55 L348.6,396.36 L349.6,396.23 L350.6,396.12 L351.6,396.04 L352.6,395.97 L353.6,395.90 L354.6,395.82 L355.6,395.71 L356.6,395.55 L357.6,395.35 L358.6,395.12 L359.6,394.89 L360.6,394.68 L361.6,394.52 L362.6,394.41 L363.6,394.33 L364.6,394.25 L365.6,394.18 L366.6,394.08 L367.6,393.90 L368.6,393.60 L369.6,393.19 L370.6,392.72 L371.6,392.31 L372.6,392.04 L373.6,391.96 L374.6,392.02 L375.6,392.15 L376.6,392.34 L377.6,392.54 L378.6,392.74 L379.6,392.91 L380.6,393.06 L381.6,393.19 L382.6,393.31 L383.6,393.43 L384.6,393.55 L385.6,393.66 L386.6,393.76 L387.6,393.85 L388.6,393.94 L389.6,394.01 L390.6,394.09 L391.6,394.16 L392.6,394.24 L393.6,394.30 L394.6,394.37 L395.6,394.42 L396.6,394.46 L397.6,394.48 L398.6,394.45 L399.6,394.30 L400.6,394.00 L401.6,393.57 L402.6,393.08 L403.6,392.57 L404.6,392.13 L405.6,391.82 L406.6,391.66 L407.6,391.64 L408.6,391.69 L409.6,391.77 L410.6,391.87 L411.6,391.98 L412.6,392.07 L413.6,392.14 L414.6,392.18 L415.6,392.17 L416.6,392.12 L417.6,392.03 L418.6,391.91 L419.6,391.77 L420.6,391.62 L421.6,391.46 L422.6,391.31 L423.6,391.18 L424.6,391.06 L425.6,390.94 L426.6,390.82 L427.6,390.71 L428.6,390.60 L429.6,390.50 L430.6,390.41 L431.6,390.34 L432.6,390.29 L433.6,390.25 L434.6,390.22 L435.6,390.20 L436.6,390.17 L437.6,390.15 L438.6,390.13 L439.6,390.12 L440.6,390.10 L441.6,390.09 L442.6,390.07 L443.6,390.06 L444.6,390.04 L445.6,390.02 L446.6,390.00 L447.6,389.97 L448.6,389.94 L449.6,389.90 L450.6,389.84 L451.6,389.76 L452.6,389.65 L453.6,389.53 L454.6,389.39 L455.6,389.24 L456.6,389.09 L457.6,388.94 L458.6,388.80 L459.6,388.68 L460.6,388.57 L461.6,388.49 L462.6,388.44 L463.6,388.43 L464.6,388.52 L465.6,388.70 L466.6,388.97 L467.6,389.30 L468.6,389.67 L469.6,390.05 L470.6,390.40 L471.6,390.70 L472.6,390.92 L473.6,391.01 L474.6,390.88 L475.6,390.47 L476.6,389.82 L477.6,389.06 L478.6,388.32 L479.6,387.70 L480.6,387.19 L481.6,386.73 L482.6,386.31 L483.6,385.97 L484.6,385.74 L485.6,385.69 L486.6,385.82 L487.6,386.14 L488.6,386.60 L489.6,387.15 L490.6,387.72 L491.6,388.26 L492.6,388.72 L493.6,389.05 L494.6,389.29 L495.6,389.47 L496.6,389.63 L497.6,389.80 L498.6,390.01 L499.6,390.28 L500.6,390.59 L501.6,390.92 L502.6,391.26 L503.6,391.57 L504.6,391.85 L505.6,392.07 L506.6,392.22 L507.6,392.34 L508.6,392.43 L509.6,392.47 L510.6,392.47 L511.6,392.43 L512.6,392.35 L513.6,392.23 L514.6,392.09 L515.6,391.92 L516.6,391.74 L517.6,391.54 L518.6,391.33 L519.6,391.12 L520.6,390.87 L521.6,390.54 L522.6,390.15 L523.6,389.71 L524.6,389.28 L525.6,388.90 L526.6,388.62 L527.6,388.47 L528.6,388.43 L529.6,388.47 L530.6,388.54 L531.6,388.63 L532.6,388.75 L533.6,388.87 L534.6,389.01 L535.6,389.15 L536.6,389.28 L537.6,389.40 L538.6,389.51 L539.6,389.60 L540.6,389.66 L541.6,389.68 L542.6,389.65 L543.6,389.55 L544.6,389.40 L545.6,389.21 L546.6,389.01 L547.6,388.81 L548.6,388.63 L549.6,388.50 L550.6,388.44 L551.6,388.47 L552.6,388.60 L553.6,388.82 L554.6,389.10 L555.6,389.43 L556.6,389.78 L557.6,390.14 L558.6,390.47 L559.6,390.76 L560.6,390.98 L561.6,391.11 L562.6,391.11 L563.6,390.93 L564.6,390.56 L565.6,390.05 L566.6,389.45 L567.6,388.84 L568.6,388.28 L569.6,387.83 L570.6,387.55 L571.6,387.45 L572.6,387.48 L573.6,387.58 L574.6,387.73 L575.6,387.91 L576.6,388.11 L577.6,388.33 L578.6,388.55 L579.6,388.75 L580.6,388.94 L581.6,389.09 L582.6,389.21 L583.6,389.26 L584.6,389.23 L585.6,389.08 L586.6,388.82 L587.6,388.49 L588.6,388.11 L589.6,387.72 L590.6,387.37 L591.6,387.08 L592.6,386.89 L593.6,386.79 L594.6,386.73 L595.6,386.70 L596.6,386.67 L597.6,386.64 L598.6,386.62 L599.6,386.61 L600.6,386.59 L601.6,386.57 L602.6,386.55 L603.6,386.53 L604.6,386.50 L605.6,386.47 L606.6,386.42 L607.6,386.33 L608.6,386.19 L609.6,385.97 L610.6,385.69 L611.6,385.37 L612.6,385.01 L613.6,384.64 L614.6,384.26 L615.6,383.89 L616.6,383.58" fill="none" stroke="#78c47b" stroke-width="1.5"/></svg>
<div class="t" style="left:236.84px;top:440.81px;font-size:6.8px;font-weight:normal;color:#555d6a;font-family:'Liberation Mono',monospace;-webkit-text-stroke:0.15px #555d6a">6 AM</div>
<div class="t" style="left:269.36px;top:440.81px;font-size:6.8px;font-weight:normal;color:#555d6a;font-family:'Liberation Mono',monospace;-webkit-text-stroke:0.15px #555d6a">9 AM</div>
<div class="t" style="left:299.84px;top:440.81px;font-size:6.8px;font-weight:normal;color:#555d6a;font-family:'Liberation Mono',monospace;-webkit-text-stroke:0.15px #555d6a">12 PM</div>
<div class="t" style="left:334.40px;top:440.81px;font-size:6.8px;font-weight:normal;color:#555d6a;font-family:'Liberation Mono',monospace;-webkit-text-stroke:0.15px #555d6a">2 PM</div>
<div class="t" style="left:366.92px;top:440.81px;font-size:6.8px;font-weight:normal;color:#555d6a;font-family:'Liberation Mono',monospace;-webkit-text-stroke:0.15px #555d6a">4 PM</div>
<div class="t" style="left:399.44px;top:440.81px;font-size:6.8px;font-weight:normal;color:#555d6a;font-family:'Liberation Mono',monospace;-webkit-text-stroke:0.15px #555d6a">6 PM</div>
<div class="t" style="left:431.96px;top:440.81px;font-size:6.8px;font-weight:normal;color:#555d6a;font-family:'Liberation Mono',monospace;-webkit-text-stroke:0.15px #555d6a">8 PM</div>
<div class="t" style="left:464.48px;top:440.81px;font-size:6.8px;font-weight:normal;color:#555d6a;font-family:'Liberation Mono',monospace;-webkit-text-stroke:0.15px #555d6a">9 PM</div>
<div class="t" style="left:494.96px;top:440.81px;font-size:6.8px;font-weight:normal;color:#555d6a;font-family:'Liberation Mono',monospace;-webkit-text-stroke:0.15px #555d6a">11 PM</div>
<div class="t" style="left:529.52px;top:440.81px;font-size:6.8px;font-weight:normal;color:#555d6a;font-family:'Liberation Mono',monospace;-webkit-text-stroke:0.15px #555d6a">1 AM</div>
<div class="t" style="left:562.04px;top:440.81px;font-size:6.8px;font-weight:normal;color:#555d6a;font-family:'Liberation Mono',monospace;-webkit-text-stroke:0.15px #555d6a">3 AM</div>
<div class="t" style="left:594.56px;top:440.81px;font-size:6.8px;font-weight:normal;color:#555d6a;font-family:'Liberation Mono',monospace;-webkit-text-stroke:0.15px #555d6a">5 AM</div>
<div class="r" style="left:645.80px;top:263.70px;width:195.10px;height:92.30px;background:#fff;border:1px solid #eceef1;border-radius:6px;"></div>
<div class="t" style="left:657.00px;top:278.19px;font-size:9.8px;font-weight:normal;color:#1f2530;font-family:'Liberation Sans',sans-serif;-webkit-text-stroke:0.35px #1f2530">Active Users (Last 24h)</div>
<div class="t" style="left:657.00px;top:303.73px;font-size:17.2px;font-weight:normal;color:#161b26;font-family:'Liberation Sans',sans-serif;-webkit-text-stroke:0.75px #161b26;">198</div>
<svg class="r" style="left:824px;top:274.40px" width="4" height="4" viewBox="0 0 4 4"><circle cx="2" cy="2" r="1.1" fill="#6b727d"/></svg>
<svg class="r" style="left:824px;top:277.85px" width="4" height="4" viewBox="0 0 4 4"><circle cx="2" cy="2" r="1.1" fill="#6b727d"/></svg>
<svg class="r" style="left:824px;top:281.30px" width="4" height="4" viewBox="0 0 4 4"><circle cx="2" cy="2" r="1.1" fill="#6b727d"/></svg>
<svg class="i" style="left:657.5px;top:333.0px" width="8" height="9" viewBox="0 0 8 9" stroke="#a898d8" stroke-width="0.9"><path d="M4 8.5 V1 M1.2 3.8 L4 1 L6.8 3.8"/></svg>
<div class="t" style="left:669.60px;top:334.22px;font-size:8.6px;font-weight:normal;color:#353b55;font-family:'Liberation Sans',sans-serif;-webkit-text-stroke:0.45px #353b55;">100%</div>
<div class="t" style="left:695.30px;top:334.52px;font-size:7.9px;font-weight:normal;color:#3f4754;font-family:'Liberation Mono',monospace;-webkit-text-stroke:0.25px #3f4754">vs last month</div>
<svg class="r" style="left:0;top:0" width="900" height="692" viewBox="0 0 900 692"><defs><linearGradient id="sg264" x1="0" y1="0" x2="0" y2="1"><stop offset="0" stop-color="#a898e0" stop-opacity="0.25"/><stop offset="1" stop-color="#a898e0" stop-opacity="0"/></linearGradient></defs><path d="M774.20,343.90 C777.70,340.62 781.20,337.33 784.70,335.00 C787.80,332.94 790.90,330.30 794.00,330.30 C797.10,330.30 800.20,331.19 803.30,332.70 C805.63,333.83 807.97,337.30 810.30,337.30 C812.63,337.30 814.97,335.62 817.30,332.70 C819.63,329.78 821.97,322.60 824.30,319.80 C826.27,317.44 828.23,316.67 830.20,315.90 L830.2,345.0 L774.2,345.0 Z" fill="url(#sg264)"/><path d="M774.20,343.90 C777.70,340.62 781.20,337.33 784.70,335.00 C787.80,332.94 790.90,330.30 794.00,330.30 C797.10,330.30 800.20,331.19 803.30,332.70 C805.63,333.83 807.97,337.30 810.30,337.30 C812.63,337.30 814.97,335.62 817.30,332.70 C819.63,329.78 821.97,322.60 824.30,319.80 C826.27,317.44 828.23,316.67 830.20,315.90" fill="none" stroke="#a596e0" stroke-width="1.1"/></svg>
<div class="r" style="left:645.80px;top:369.70px;width:195.10px;height:92.30px;background:#fff;border:1px solid #eceef1;border-radius:6px;"></div>
<div class="t" style="left:657.00px;top:384.19px;font-size:9.8px;font-weight:normal;color:#1f2530;font-family:'Liberation Sans',sans-serif;-webkit-text-stroke:0.35px #1f2530">AI Prompt Views (24h)</div>
<div class="t" style="left:657.00px;top:409.73px;font-size:17.2px;font-weight:normal;color:#161b26;font-family:'Liberation Sans',sans-serif;-webkit-text-stroke:0.75px #161b26;">243</div>
<svg class="r" style="left:824px;top:380.40px" width="4" height="4" viewBox="0 0 4 4"><circle cx="2" cy="2" r="1.1" fill="#6b727d"/></svg>
<svg class="r" style="left:824px;top:383.85px" width="4" height="4" viewBox="0 0 4 4"><circle cx="2" cy="2" r="1.1" fill="#6b727d"/></svg>
<svg class="r" style="left:824px;top:387.30px" width="4" height="4" viewBox="0 0 4 4"><circle cx="2" cy="2" r="1.1" fill="#6b727d"/></svg>
<svg class="i" style="left:657.5px;top:439.0px" width="8" height="9" viewBox="0 0 8 9" stroke="#a898d8" stroke-width="0.9"><path d="M4 8.5 V1 M1.2 3.8 L4 1 L6.8 3.8"/></svg>
<div class="t" style="left:669.60px;top:440.22px;font-size:8.6px;font-weight:normal;color:#353b55;font-family:'Liberation Sans',sans-serif;-webkit-text-stroke:0.45px #353b55;">100%</div>
<div class="t" style="left:695.30px;top:440.52px;font-size:7.9px;font-weight:normal;color:#3f4754;font-family:'Liberation Mono',monospace;-webkit-text-stroke:0.25px #3f4754">vs last month</div>
<svg class="r" style="left:0;top:0" width="900" height="692" viewBox="0 0 900 692"><defs><linearGradient id="sg370" x1="0" y1="0" x2="0" y2="1"><stop offset="0" stop-color="#a898e0" stop-opacity="0.25"/><stop offset="1" stop-color="#a898e0" stop-opacity="0"/></linearGradient></defs><path d="M774.20,449.90 C777.70,446.62 781.20,443.33 784.70,441.00 C787.80,438.94 790.90,436.30 794.00,436.30 C797.10,436.30 800.20,437.19 803.30,438.70 C805.63,439.83 807.97,443.30 810.30,443.30 C812.63,443.30 814.97,441.62 817.30,438.70 C819.63,435.78 821.97,428.60 824.30,425.80 C826.27,423.44 828.23,422.67 830.20,421.90 L830.2,451.0 L774.2,451.0 Z" fill="url(#sg370)"/><path d="M774.20,449.90 C777.70,446.62 781.20,443.33 784.70,441.00 C787.80,438.94 790.90,436.30 794.00,436.30 C797.10,436.30 800.20,437.19 803.30,438.70 C805.63,439.83 807.97,443.30 810.30,443.30 C812.63,443.30 814.97,441.62 817.30,438.70 C819.63,435.78 821.97,428.60 824.30,425.80 C826.27,423.44 828.23,422.67 830.20,421.90" fill="none" stroke="#a596e0" stroke-width="1.1"/></svg>
<div class="r" style="left:216.80px;top:477.00px;width:624.20px;height:243.00px;background:#fff;border:1px solid #eceef1;border-radius:7px;"></div>
<div class="t" style="left:230.20px;top:497.33px;font-size:11.3px;font-weight:normal;color:#161b26;font-family:'Liberation Sans',sans-serif;-webkit-text-stroke:0.75px #161b26;-webkit-text-stroke:0.6px #161b26;letter-spacing:0.3px">Live Users Currently Online</div>
<div class="r" style="left:746.20px;top:490.50px;width:80.80px;height:22.70px;background:#fff;border:1px solid #e3e5e8;border-radius:5px;"></div>
<div class="t" style="left:755.50px;top:497.82px;font-size:8.6px;font-weight:normal;color:#2b3440;font-family:'Liberation Sans',sans-serif;-webkit-text-stroke:0.45px #2b3440;">Real-time report</div>
<div class="t" style="left:677.30px;top:532.06px;font-size:17.6px;font-weight:normal;color:#161b26;font-family:'Liberation Sans',sans-serif;-webkit-text-stroke:0.75px #161b26;letter-spacing:-0.3px">12.1 K</div>
<svg class="r" style="left:0;top:0" width="900" height="692" viewBox="0 0 900 692"><defs><pattern id="dots" x="226.0" y="526.0" width="2.2" height="2.2" patternUnits="userSpaceOnUse"><rect x="0" y="0.48" width="1.6" height="0.64" fill="#ced2d7"/><rect x="0.48" y="0" width="0.64" height="1.6" fill="#ced2d7"/></pattern><radialGradient id="halo"><stop offset="0" stop-color="#8fd88f" stop-opacity="0.5"/><stop offset="0.7" stop-color="#a6e0a6" stop-opacity="0.38"/><stop offset="1" stop-color="#b8e8b8" stop-opacity="0"/></radialGradient></defs><clipPath id="mapclip"><rect x="217" y="478" width="430" height="214"/></clipPath><g clip-path="url(#mapclip)"><filter id="mblur" x="-2%" y="-2%" width="104%" height="104%"><feGaussianBlur stdDeviation="0.35"/></filter><g fill="url(#dots)" filter="url(#mblur)"><rect x="377.8" y="526.0" width="24.2" height="2.2"/><rect x="336.0" y="528.2" width="26.4" height="2.2"/><rect x="377.8" y="528.2" width="28.6" height="2.2"/><rect x="327.2" y="530.4" width="6.6" height="2.2"/><rect x="336.0" y="530.4" width="26.4" height="2.2"/><rect x="377.8" y="530.4" width="28.6" height="2.2"/><rect x="320.6" y="532.6" width="33.0" height="2.2"/><rect x="358.0" y="532.6" width="57.2" height="2.2"/><rect x="476.8" y="532.6" width="26.4" height="2.2"/><rect x="531.8" y="532.6" width="6.6" height="2.2"/><rect x="320.6" y="534.8" width="30.8" height="2.2"/><rect x="355.8" y="534.8" width="55.0" height="2.2"/><rect x="450.4" y="534.8" width="11.0" height="2.2"/><rect x="481.2" y="534.8" width="4.4" height="2.2"/><rect x="492.2" y="534.8" width="2.2" height="2.2"/><rect x="531.8" y="534.8" width="8.8" height="2.2"/><rect x="309.6" y="537.0" width="11.0" height="2.2"/><rect x="322.8" y="537.0" width="28.6" height="2.2"/><rect x="355.8" y="537.0" width="55.0" height="2.2"/><rect x="450.4" y="537.0" width="11.0" height="2.2"/><rect x="481.2" y="537.0" width="4.4" height="2.2"/><rect x="492.2" y="537.0" width="2.2" height="2.2"/><rect x="531.8" y="537.0" width="8.8" height="2.2"/><rect x="542.8" y="537.0" width="4.4" height="2.2"/><rect x="309.6" y="539.2" width="11.0" height="2.2"/><rect x="322.8" y="539.2" width="24.2" height="2.2"/><rect x="353.6" y="539.2" width="55.0" height="2.2"/><rect x="439.4" y="539.2" width="17.6" height="2.2"/><rect x="534.0" y="539.2" width="13.2" height="2.2"/><rect x="300.8" y="541.4" width="6.6" height="2.2"/><rect x="309.6" y="541.4" width="37.4" height="2.2"/><rect x="349.2" y="541.4" width="57.2" height="2.2"/><rect x="441.6" y="541.4" width="15.4" height="2.2"/><rect x="542.8" y="541.4" width="4.4" height="2.2"/><rect x="294.2" y="543.6" width="11.0" height="2.2"/><rect x="318.4" y="543.6" width="6.6" height="2.2"/><rect x="327.2" y="543.6" width="15.4" height="2.2"/><rect x="349.2" y="543.6" width="59.4" height="2.2"/><rect x="443.8" y="543.6" width="13.2" height="2.2"/><rect x="540.6" y="543.6" width="15.4" height="2.2"/><rect x="582.4" y="543.6" width="6.6" height="2.2"/><rect x="292.0" y="545.8" width="11.0" height="2.2"/><rect x="305.2" y="545.8" width="13.2" height="2.2"/><rect x="322.8" y="545.8" width="4.4" height="2.2"/><rect x="333.8" y="545.8" width="8.8" height="2.2"/><rect x="364.6" y="545.8" width="44.0" height="2.2"/><rect x="496.6" y="545.8" width="11.0" height="2.2"/><rect x="534.0" y="545.8" width="22.0" height="2.2"/><rect x="580.2" y="545.8" width="19.8" height="2.2"/><rect x="296.4" y="548.0" width="15.4" height="2.2"/><rect x="314.0" y="548.0" width="6.6" height="2.2"/><rect x="322.8" y="548.0" width="19.8" height="2.2"/><rect x="364.6" y="548.0" width="44.0" height="2.2"/><rect x="492.2" y="548.0" width="8.8" height="2.2"/><rect x="527.4" y="548.0" width="28.6" height="2.2"/><rect x="580.2" y="548.0" width="19.8" height="2.2"/><rect x="289.8" y="550.2" width="6.6" height="2.2"/><rect x="314.0" y="550.2" width="4.4" height="2.2"/><rect x="322.8" y="550.2" width="4.4" height="2.2"/><rect x="366.8" y="550.2" width="39.6" height="2.2"/><rect x="487.8" y="550.2" width="8.8" height="2.2"/><rect x="525.2" y="550.2" width="28.6" height="2.2"/><rect x="289.8" y="552.4" width="22.0" height="2.2"/><rect x="314.0" y="552.4" width="28.6" height="2.2"/><rect x="366.8" y="552.4" width="39.6" height="2.2"/><rect x="485.6" y="552.4" width="8.8" height="2.2"/><rect x="507.6" y="552.4" width="2.2" height="2.2"/><rect x="518.6" y="552.4" width="55.0" height="2.2"/><rect x="584.6" y="552.4" width="4.4" height="2.2"/><rect x="287.6" y="554.6" width="24.2" height="2.2"/><rect x="316.2" y="554.6" width="28.6" height="2.2"/><rect x="366.8" y="554.6" width="37.4" height="2.2"/><rect x="487.8" y="554.6" width="4.4" height="2.2"/><rect x="505.4" y="554.6" width="68.2" height="2.2"/><rect x="582.4" y="554.6" width="15.4" height="2.2"/><rect x="252.4" y="556.8" width="6.6" height="2.2"/><rect x="296.4" y="556.8" width="15.4" height="2.2"/><rect x="320.6" y="556.8" width="30.8" height="2.2"/><rect x="369.0" y="556.8" width="35.2" height="2.2"/><rect x="454.8" y="556.8" width="8.8" height="2.2"/><rect x="487.8" y="556.8" width="6.6" height="2.2"/><rect x="503.2" y="556.8" width="105.6" height="2.2"/><rect x="626.4" y="556.8" width="6.6" height="2.2"/><rect x="248.0" y="559.0" width="24.2" height="2.2"/><rect x="278.8" y="559.0" width="15.4" height="2.2"/><rect x="298.6" y="559.0" width="19.8" height="2.2"/><rect x="320.6" y="559.0" width="2.2" height="2.2"/><rect x="342.6" y="559.0" width="13.2" height="2.2"/><rect x="369.0" y="559.0" width="35.2" height="2.2"/><rect x="448.2" y="559.0" width="17.6" height="2.2"/><rect x="494.4" y="559.0" width="6.6" height="2.2"/><rect x="503.2" y="559.0" width="123.2" height="2.2"/><rect x="243.6" y="561.2" width="96.8" height="2.2"/><rect x="344.8" y="561.2" width="11.0" height="2.2"/><rect x="371.2" y="561.2" width="33.0" height="2.2"/><rect x="446.0" y="561.2" width="26.4" height="2.2"/><rect x="476.8" y="561.2" width="156.2" height="2.2"/><rect x="245.8" y="563.4" width="114.4" height="2.2"/><rect x="366.8" y="563.4" width="26.4" height="2.2"/><rect x="443.8" y="563.4" width="193.6" height="2.2"/><rect x="241.4" y="565.6" width="96.8" height="2.2"/><rect x="342.6" y="565.6" width="19.8" height="2.2"/><rect x="371.2" y="565.6" width="17.6" height="2.2"/><rect x="402.0" y="565.6" width="11.0" height="2.2"/><rect x="441.6" y="565.6" width="6.6" height="2.2"/><rect x="450.4" y="565.6" width="180.4" height="2.2"/><rect x="633.0" y="565.6" width="8.8" height="2.2"/><rect x="237.0" y="567.8" width="94.6" height="2.2"/><rect x="333.8" y="567.8" width="4.4" height="2.2"/><rect x="342.6" y="567.8" width="17.6" height="2.2"/><rect x="371.2" y="567.8" width="13.2" height="2.2"/><rect x="404.2" y="567.8" width="11.0" height="2.2"/><rect x="439.4" y="567.8" width="13.2" height="2.2"/><rect x="454.8" y="567.8" width="176.0" height="2.2"/><rect x="635.2" y="567.8" width="6.6" height="2.2"/><rect x="250.2" y="570.0" width="79.2" height="2.2"/><rect x="331.6" y="570.0" width="8.8" height="2.2"/><rect x="349.2" y="570.0" width="6.6" height="2.2"/><rect x="371.2" y="570.0" width="13.2" height="2.2"/><rect x="404.2" y="570.0" width="4.4" height="2.2"/><rect x="437.2" y="570.0" width="193.6" height="2.2"/><rect x="637.4" y="570.0" width="2.2" height="2.2"/><rect x="243.6" y="572.2" width="83.6" height="2.2"/><rect x="342.6" y="572.2" width="2.2" height="2.2"/><rect x="351.4" y="572.2" width="6.6" height="2.2"/><rect x="371.2" y="572.2" width="13.2" height="2.2"/><rect x="437.2" y="572.2" width="11.0" height="2.2"/><rect x="452.6" y="572.2" width="178.2" height="2.2"/><rect x="243.6" y="574.4" width="79.2" height="2.2"/><rect x="329.4" y="574.4" width="4.4" height="2.2"/><rect x="340.4" y="574.4" width="11.0" height="2.2"/><rect x="373.4" y="574.4" width="8.8" height="2.2"/><rect x="437.2" y="574.4" width="13.2" height="2.2"/><rect x="452.6" y="574.4" width="171.6" height="2.2"/><rect x="243.6" y="576.6" width="79.2" height="2.2"/><rect x="325.0" y="576.6" width="8.8" height="2.2"/><rect x="340.4" y="576.6" width="17.6" height="2.2"/><rect x="375.6" y="576.6" width="6.6" height="2.2"/><rect x="437.2" y="576.6" width="11.0" height="2.2"/><rect x="454.8" y="576.6" width="149.6" height="2.2"/><rect x="608.8" y="576.6" width="6.6" height="2.2"/><rect x="617.6" y="576.6" width="4.4" height="2.2"/><rect x="248.0" y="578.8" width="11.0" height="2.2"/><rect x="274.4" y="578.8" width="59.4" height="2.2"/><rect x="340.4" y="578.8" width="19.8" height="2.2"/><rect x="437.2" y="578.8" width="6.6" height="2.2"/><rect x="446.0" y="578.8" width="140.8" height="2.2"/><rect x="604.4" y="578.8" width="8.8" height="2.2"/><rect x="252.4" y="581.0" width="6.6" height="2.2"/><rect x="276.6" y="581.0" width="57.2" height="2.2"/><rect x="342.6" y="581.0" width="19.8" height="2.2"/><rect x="421.8" y="581.0" width="6.6" height="2.2"/><rect x="437.2" y="581.0" width="8.8" height="2.2"/><rect x="450.4" y="581.0" width="136.4" height="2.2"/><rect x="602.2" y="581.0" width="11.0" height="2.2"/><rect x="248.0" y="583.2" width="4.4" height="2.2"/><rect x="278.8" y="583.2" width="59.4" height="2.2"/><rect x="342.6" y="583.2" width="19.8" height="2.2"/><rect x="419.6" y="583.2" width="8.8" height="2.2"/><rect x="437.2" y="583.2" width="147.4" height="2.2"/><rect x="602.2" y="583.2" width="8.8" height="2.2"/><rect x="243.6" y="585.4" width="4.4" height="2.2"/><rect x="278.8" y="585.4" width="57.2" height="2.2"/><rect x="342.6" y="585.4" width="22.0" height="2.2"/><rect x="417.4" y="585.4" width="11.0" height="2.2"/><rect x="435.0" y="585.4" width="149.6" height="2.2"/><rect x="586.8" y="585.4" width="4.4" height="2.2"/><rect x="602.2" y="585.4" width="8.8" height="2.2"/><rect x="237.0" y="587.6" width="6.6" height="2.2"/><rect x="281.0" y="587.6" width="85.8" height="2.2"/><rect x="417.4" y="587.6" width="11.0" height="2.2"/><rect x="430.6" y="587.6" width="154.0" height="2.2"/><rect x="586.8" y="587.6" width="4.4" height="2.2"/><rect x="604.4" y="587.6" width="2.2" height="2.2"/><rect x="287.6" y="589.8" width="72.6" height="2.2"/><rect x="364.6" y="589.8" width="6.6" height="2.2"/><rect x="424.0" y="589.8" width="37.4" height="2.2"/><rect x="468.0" y="589.8" width="116.6" height="2.2"/><rect x="586.8" y="589.8" width="4.4" height="2.2"/><rect x="287.6" y="592.0" width="72.6" height="2.2"/><rect x="362.4" y="592.0" width="8.8" height="2.2"/><rect x="426.2" y="592.0" width="37.4" height="2.2"/><rect x="472.4" y="592.0" width="112.2" height="2.2"/><rect x="586.8" y="592.0" width="4.4" height="2.2"/><rect x="289.8" y="594.2" width="70.4" height="2.2"/><rect x="426.2" y="594.2" width="37.4" height="2.2"/><rect x="472.4" y="594.2" width="112.2" height="2.2"/><rect x="586.8" y="594.2" width="4.4" height="2.2"/><rect x="289.8" y="596.4" width="72.6" height="2.2"/><rect x="426.2" y="596.4" width="26.4" height="2.2"/><rect x="463.6" y="596.4" width="8.8" height="2.2"/><rect x="474.6" y="596.4" width="110.0" height="2.2"/><rect x="289.8" y="598.6" width="72.6" height="2.2"/><rect x="428.4" y="598.6" width="15.4" height="2.2"/><rect x="450.4" y="598.6" width="4.4" height="2.2"/><rect x="468.0" y="598.6" width="11.0" height="2.2"/><rect x="485.6" y="598.6" width="94.6" height="2.2"/><rect x="586.8" y="598.6" width="6.6" height="2.2"/><rect x="289.8" y="600.8" width="59.4" height="2.2"/><rect x="419.6" y="600.8" width="33.0" height="2.2"/><rect x="465.8" y="600.8" width="11.0" height="2.2"/><rect x="479.0" y="600.8" width="6.6" height="2.2"/><rect x="487.8" y="600.8" width="90.2" height="2.2"/><rect x="584.6" y="600.8" width="8.8" height="2.2"/><rect x="285.4" y="603.0" width="66.0" height="2.2"/><rect x="417.4" y="603.0" width="15.4" height="2.2"/><rect x="437.2" y="603.0" width="6.6" height="2.2"/><rect x="448.2" y="603.0" width="6.6" height="2.2"/><rect x="459.2" y="603.0" width="116.6" height="2.2"/><rect x="584.6" y="603.0" width="2.2" height="2.2"/><rect x="289.8" y="605.2" width="57.2" height="2.2"/><rect x="417.4" y="605.2" width="11.0" height="2.2"/><rect x="441.6" y="605.2" width="11.0" height="2.2"/><rect x="457.0" y="605.2" width="103.4" height="2.2"/><rect x="567.0" y="605.2" width="8.8" height="2.2"/><rect x="584.6" y="605.2" width="2.2" height="2.2"/><rect x="294.2" y="607.4" width="52.8" height="2.2"/><rect x="417.4" y="607.4" width="11.0" height="2.2"/><rect x="441.6" y="607.4" width="11.0" height="2.2"/><rect x="457.0" y="607.4" width="103.4" height="2.2"/><rect x="294.2" y="609.6" width="50.6" height="2.2"/><rect x="421.8" y="609.6" width="4.4" height="2.2"/><rect x="430.6" y="609.6" width="13.2" height="2.2"/><rect x="452.6" y="609.6" width="107.8" height="2.2"/><rect x="296.4" y="611.8" width="48.4" height="2.2"/><rect x="419.6" y="611.8" width="19.8" height="2.2"/><rect x="450.4" y="611.8" width="4.4" height="2.2"/><rect x="465.8" y="611.8" width="94.6" height="2.2"/><rect x="296.4" y="614.0" width="26.4" height="2.2"/><rect x="327.2" y="614.0" width="15.4" height="2.2"/><rect x="417.4" y="614.0" width="30.8" height="2.2"/><rect x="452.6" y="614.0" width="107.8" height="2.2"/><rect x="298.6" y="616.2" width="24.2" height="2.2"/><rect x="329.4" y="616.2" width="8.8" height="2.2"/><rect x="415.2" y="616.2" width="145.2" height="2.2"/><rect x="303.0" y="618.4" width="19.8" height="2.2"/><rect x="333.8" y="618.4" width="4.4" height="2.2"/><rect x="415.2" y="618.4" width="145.2" height="2.2"/><rect x="305.2" y="620.6" width="17.6" height="2.2"/><rect x="336.0" y="620.6" width="4.4" height="2.2"/><rect x="413.0" y="620.6" width="72.6" height="2.2"/><rect x="487.8" y="620.6" width="72.6" height="2.2"/><rect x="303.0" y="622.8" width="19.8" height="2.2"/><rect x="336.0" y="622.8" width="4.4" height="2.2"/><rect x="415.2" y="622.8" width="70.4" height="2.2"/><rect x="490.0" y="622.8" width="70.4" height="2.2"/><rect x="309.6" y="625.0" width="13.2" height="2.2"/><rect x="329.4" y="625.0" width="2.2" height="2.2"/><rect x="410.8" y="625.0" width="85.8" height="2.2"/><rect x="507.6" y="625.0" width="52.8" height="2.2"/><rect x="311.8" y="627.2" width="11.0" height="2.2"/><rect x="327.2" y="627.2" width="4.4" height="2.2"/><rect x="336.0" y="627.2" width="8.8" height="2.2"/><rect x="408.6" y="627.2" width="85.8" height="2.2"/><rect x="509.8" y="627.2" width="50.6" height="2.2"/><rect x="311.8" y="629.4" width="19.8" height="2.2"/><rect x="342.6" y="629.4" width="11.0" height="2.2"/><rect x="410.8" y="629.4" width="61.6" height="2.2"/><rect x="474.6" y="629.4" width="17.6" height="2.2"/><rect x="509.8" y="629.4" width="17.6" height="2.2"/><rect x="540.6" y="629.4" width="8.8" height="2.2"/><rect x="314.0" y="631.6" width="17.6" height="2.2"/><rect x="342.6" y="631.6" width="2.2" height="2.2"/><rect x="351.4" y="631.6" width="6.6" height="2.2"/><rect x="410.8" y="631.6" width="61.6" height="2.2"/><rect x="474.6" y="631.6" width="17.6" height="2.2"/><rect x="509.8" y="631.6" width="17.6" height="2.2"/><rect x="540.6" y="631.6" width="8.8" height="2.2"/><rect x="318.4" y="633.8" width="15.4" height="2.2"/><rect x="408.6" y="633.8" width="66.0" height="2.2"/><rect x="476.8" y="633.8" width="8.8" height="2.2"/><rect x="509.8" y="633.8" width="11.0" height="2.2"/><rect x="538.4" y="633.8" width="13.2" height="2.2"/><rect x="327.2" y="636.0" width="8.8" height="2.2"/><rect x="408.6" y="636.0" width="68.2" height="2.2"/><rect x="479.0" y="636.0" width="4.4" height="2.2"/><rect x="512.0" y="636.0" width="6.6" height="2.2"/><rect x="538.4" y="636.0" width="13.2" height="2.2"/><rect x="333.8" y="638.2" width="4.4" height="2.2"/><rect x="342.6" y="638.2" width="11.0" height="2.2"/><rect x="410.8" y="638.2" width="77.0" height="2.2"/><rect x="512.0" y="638.2" width="6.6" height="2.2"/><rect x="536.2" y="638.2" width="15.4" height="2.2"/><rect x="342.6" y="640.4" width="19.8" height="2.2"/><rect x="413.0" y="640.4" width="72.6" height="2.2"/><rect x="514.2" y="640.4" width="6.6" height="2.2"/><rect x="540.6" y="640.4" width="2.2" height="2.2"/><rect x="336.0" y="642.6" width="28.6" height="2.2"/><rect x="415.2" y="642.6" width="68.2" height="2.2"/><rect x="518.6" y="642.6" width="2.2" height="2.2"/><rect x="540.6" y="642.6" width="6.6" height="2.2"/><rect x="342.6" y="644.8" width="26.4" height="2.2"/><rect x="417.4" y="644.8" width="11.0" height="2.2"/><rect x="435.0" y="644.8" width="48.4" height="2.2"/><rect x="518.6" y="644.8" width="2.2" height="2.2"/><rect x="540.6" y="644.8" width="2.2" height="2.2"/><rect x="549.4" y="644.8" width="11.0" height="2.2"/><rect x="342.6" y="647.0" width="28.6" height="2.2"/><rect x="437.2" y="647.0" width="44.0" height="2.2"/><rect x="549.4" y="647.0" width="11.0" height="2.2"/><rect x="342.6" y="649.2" width="30.8" height="2.2"/><rect x="437.2" y="649.2" width="41.8" height="2.2"/><rect x="542.8" y="649.2" width="4.4" height="2.2"/><rect x="549.4" y="649.2" width="11.0" height="2.2"/><rect x="338.2" y="651.4" width="39.6" height="2.2"/><rect x="437.2" y="651.4" width="39.6" height="2.2"/><rect x="542.8" y="651.4" width="4.4" height="2.2"/><rect x="549.4" y="651.4" width="11.0" height="2.2"/><rect x="336.0" y="653.6" width="46.2" height="2.2"/><rect x="439.4" y="653.6" width="35.2" height="2.2"/><rect x="542.8" y="653.6" width="4.4" height="2.2"/><rect x="551.6" y="653.6" width="8.8" height="2.2"/><rect x="338.2" y="655.8" width="50.6" height="2.2"/><rect x="439.4" y="655.8" width="35.2" height="2.2"/><rect x="547.2" y="655.8" width="13.2" height="2.2"/><rect x="340.4" y="658.0" width="50.6" height="2.2"/><rect x="439.4" y="658.0" width="35.2" height="2.2"/><rect x="547.2" y="658.0" width="13.2" height="2.2"/><rect x="342.6" y="660.2" width="48.4" height="2.2"/><rect x="441.6" y="660.2" width="33.0" height="2.2"/><rect x="549.4" y="660.2" width="11.0" height="2.2"/><rect x="342.6" y="662.4" width="46.2" height="2.2"/><rect x="441.6" y="662.4" width="35.2" height="2.2"/><rect x="344.8" y="664.6" width="41.8" height="2.2"/><rect x="441.6" y="664.6" width="33.0" height="2.2"/><rect x="481.2" y="664.6" width="4.4" height="2.2"/><rect x="344.8" y="666.8" width="41.8" height="2.2"/><rect x="441.6" y="666.8" width="33.0" height="2.2"/><rect x="476.8" y="666.8" width="8.8" height="2.2"/><rect x="347.0" y="669.0" width="39.6" height="2.2"/><rect x="441.6" y="669.0" width="33.0" height="2.2"/><rect x="476.8" y="669.0" width="8.8" height="2.2"/><rect x="351.4" y="671.2" width="35.2" height="2.2"/><rect x="441.6" y="671.2" width="30.8" height="2.2"/><rect x="479.0" y="671.2" width="6.6" height="2.2"/><rect x="558.2" y="671.2" width="66.0" height="2.2"/><rect x="351.4" y="673.4" width="33.0" height="2.2"/><rect x="441.6" y="673.4" width="28.6" height="2.2"/><rect x="479.0" y="673.4" width="6.6" height="2.2"/><rect x="556.0" y="673.4" width="44.0" height="2.2"/><rect x="604.4" y="673.4" width="13.2" height="2.2"/><rect x="351.4" y="675.6" width="33.0" height="2.2"/><rect x="443.8" y="675.6" width="26.4" height="2.2"/><rect x="479.0" y="675.6" width="4.4" height="2.2"/><rect x="553.8" y="675.6" width="46.2" height="2.2"/><rect x="608.8" y="675.6" width="6.6" height="2.2"/><rect x="351.4" y="677.8" width="26.4" height="2.2"/><rect x="443.8" y="677.8" width="26.4" height="2.2"/><rect x="553.8" y="677.8" width="46.2" height="2.2"/><rect x="351.4" y="680.0" width="24.2" height="2.2"/><rect x="446.0" y="680.0" width="19.8" height="2.2"/><rect x="553.8" y="680.0" width="46.2" height="2.2"/><rect x="349.2" y="682.2" width="26.4" height="2.2"/><rect x="446.0" y="682.2" width="19.8" height="2.2"/><rect x="556.0" y="682.2" width="44.0" height="2.2"/><rect x="349.2" y="684.4" width="22.0" height="2.2"/><rect x="446.0" y="684.4" width="19.8" height="2.2"/><rect x="556.0" y="684.4" width="44.0" height="2.2"/><rect x="349.2" y="686.6" width="22.0" height="2.2"/><rect x="448.2" y="686.6" width="15.4" height="2.2"/><rect x="558.2" y="686.6" width="41.8" height="2.2"/><rect x="349.2" y="688.8" width="22.0" height="2.2"/><rect x="450.4" y="688.8" width="6.6" height="2.2"/><rect x="558.2" y="688.8" width="41.8" height="2.2"/><rect x="349.2" y="691.0" width="22.0" height="2.2"/><rect x="558.2" y="691.0" width="41.8" height="2.2"/></g><circle cx="292.9" cy="605.3" r="10.5" fill="url(#halo)"/><circle cx="292.9" cy="605.3" r="9.2" fill="#c8ecc8" fill-opacity="0.25"/><circle cx="292.9" cy="605.3" r="6.2" fill="#b4e4b4" fill-opacity="0.35"/><circle cx="292.9" cy="605.3" r="4.2" fill="#a6e2a6" fill-opacity="0.5"/><circle cx="292.9" cy="605.3" r="2.6" fill="#55b35a"/><circle cx="308.8" cy="599.1" r="10.5" fill="url(#halo)"/><circle cx="308.8" cy="599.1" r="9.2" fill="#c8ecc8" fill-opacity="0.25"/><circle cx="308.8" cy="599.1" r="6.2" fill="#b4e4b4" fill-opacity="0.35"/><circle cx="308.8" cy="599.1" r="4.2" fill="#a6e2a6" fill-opacity="0.5"/><circle cx="308.8" cy="599.1" r="2.6" fill="#55b35a"/><circle cx="305.8" cy="617" r="10.5" fill="url(#halo)"/><circle cx="305.8" cy="617" r="9.2" fill="#c8ecc8" fill-opacity="0.25"/><circle cx="305.8" cy="617" r="6.2" fill="#b4e4b4" fill-opacity="0.35"/><circle cx="305.8" cy="617" r="4.2" fill="#a6e2a6" fill-opacity="0.5"/><circle cx="305.8" cy="617" r="2.6" fill="#55b35a"/><circle cx="450.2" cy="595.9" r="10.5" fill="url(#halo)"/><circle cx="450.2" cy="595.9" r="9.2" fill="#c8ecc8" fill-opacity="0.25"/><circle cx="450.2" cy="595.9" r="6.2" fill="#b4e4b4" fill-opacity="0.35"/><circle cx="450.2" cy="595.9" r="4.2" fill="#a6e2a6" fill-opacity="0.5"/><circle cx="450.2" cy="595.9" r="2.6" fill="#55b35a"/><circle cx="538" cy="593.3" r="10.5" fill="url(#halo)"/><circle cx="538" cy="593.3" r="9.2" fill="#c8ecc8" fill-opacity="0.25"/><circle cx="538" cy="593.3" r="6.2" fill="#b4e4b4" fill-opacity="0.35"/><circle cx="538" cy="593.3" r="4.2" fill="#a6e2a6" fill-opacity="0.5"/><circle cx="538" cy="593.3" r="2.6" fill="#55b35a"/><circle cx="572.6" cy="579.5" r="10.5" fill="url(#halo)"/><circle cx="572.6" cy="579.5" r="9.2" fill="#c8ecc8" fill-opacity="0.25"/><circle cx="572.6" cy="579.5" r="6.2" fill="#b4e4b4" fill-opacity="0.35"/><circle cx="572.6" cy="579.5" r="4.2" fill="#a6e2a6" fill-opacity="0.5"/><circle cx="572.6" cy="579.5" r="2.6" fill="#55b35a"/><circle cx="533.7" cy="638" r="10.5" fill="url(#halo)"/><circle cx="533.7" cy="638" r="9.2" fill="#c8ecc8" fill-opacity="0.25"/><circle cx="533.7" cy="638" r="6.2" fill="#b4e4b4" fill-opacity="0.35"/><circle cx="533.7" cy="638" r="4.2" fill="#a6e2a6" fill-opacity="0.5"/><circle cx="533.7" cy="638" r="2.6" fill="#55b35a"/><circle cx="450.2" cy="654.2" r="10.5" fill="url(#halo)"/><circle cx="450.2" cy="654.2" r="9.2" fill="#c8ecc8" fill-opacity="0.25"/><circle cx="450.2" cy="654.2" r="6.2" fill="#b4e4b4" fill-opacity="0.35"/><circle cx="450.2" cy="654.2" r="4.2" fill="#a6e2a6" fill-opacity="0.5"/><circle cx="450.2" cy="654.2" r="2.6" fill="#55b35a"/><circle cx="590.7" cy="697" r="10.5" fill="url(#halo)"/><circle cx="590.7" cy="697" r="9.2" fill="#c8ecc8" fill-opacity="0.25"/><circle cx="590.7" cy="697" r="6.2" fill="#b4e4b4" fill-opacity="0.35"/><circle cx="590.7" cy="697" r="4.2" fill="#a6e2a6" fill-opacity="0.5"/><circle cx="590.7" cy="697" r="2.6" fill="#55b35a"/></g></svg>
<div class="r" style="left:560.00px;top:611.40px;width:64.00px;height:60.60px;background:#fff;border-radius:4px;box-shadow:0 1px 6px rgba(20,30,40,0.10)"></div>
<svg class="r" style="left:586.2px;top:615.5px" width="11.6" height="11.6" viewBox="0 0 20 20"><defs><clipPath id="auc"><circle cx="10" cy="10" r="10"/></clipPath></defs><g clip-path="url(#auc)"><rect width="20" height="20" fill="#1c3f9e"/><rect x="0" y="0" width="10" height="8" fill="#1c3f9e"/><path d="M0 0 L10 8 M10 0 L0 8" stroke="#fff" stroke-width="2"/><path d="M0 0 L10 8 M10 0 L0 8" stroke="#d8283a" stroke-width="0.8"/><path d="M5 0 V8 M0 4 H10" stroke="#fff" stroke-width="2.4"/><path d="M5 0 V8 M0 4 H10" stroke="#d8283a" stroke-width="1.2"/><circle cx="5" cy="14" r="1.3" fill="#fff"/><circle cx="14" cy="6" r="1" fill="#fff"/><circle cx="16" cy="11" r="1" fill="#fff"/><circle cx="13" cy="15" r="1" fill="#fff"/></g></svg>
<div class="t" style="left:574.00px;top:634.42px;font-size:7.0px;font-weight:bold;color:#2b3440;font-family:'Liberation Sans',sans-serif;">Melbourne,</div>
<div class="t" style="left:584.00px;top:644.12px;font-size:7.0px;font-weight:bold;color:#2b3440;font-family:'Liberation Sans',sans-serif;">AUS</div>
<div class="t" style="left:575.00px;top:656.92px;font-size:7.0px;font-weight:normal;color:#6b7280;font-family:'Liberation Sans',sans-serif;">6 % Online</div>
<svg class="r" style="left:676.8px;top:563.3px" width="13.8" height="13.8" viewBox="0 0 20 20"><defs><clipPath id="fcua"><circle cx="10" cy="10" r="10"/></clipPath></defs><g clip-path="url(#fcua)"><rect width="20" height="10" fill="#3d7fe0"/><rect y="10" width="20" height="10" fill="#f7d33a"/></g></svg>
<div class="t" style="left:699.70px;top:565.34px;font-size:9.0px;font-weight:normal;color:#3a4350;font-family:'Liberation Sans',sans-serif;-webkit-text-stroke:0.25px #3a4350">Ukraina</div>
<div class="r" style="left:699.70px;top:579.70px;width:105.50px;height:4.30px;background:#e8eaed;border-radius:3px;"></div>
<div class="r" style="left:699.70px;top:579.70px;width:52.75px;height:4.30px;background:#2d6133;border-radius:3px;"></div>
<div class="t" style="left:812.40px;top:578.15px;font-size:8.3px;font-weight:normal;color:#2f3744;font-family:'Liberation Mono',monospace;-webkit-text-stroke:0.25px #2f3744">50%</div>
<svg class="r" style="left:676.8px;top:594.5px" width="13.8" height="13.8" viewBox="0 0 20 20"><defs><clipPath id="fcid"><circle cx="10" cy="10" r="10"/></clipPath></defs><g clip-path="url(#fcid)"><rect width="20" height="10" fill="#d9304a"/><rect y="10" width="20" height="10" fill="#eeeeee"/></g></svg>
<div class="t" style="left:699.70px;top:596.54px;font-size:9.0px;font-weight:normal;color:#3a4350;font-family:'Liberation Sans',sans-serif;-webkit-text-stroke:0.25px #3a4350">Indonesia</div>
<div class="r" style="left:699.70px;top:610.90px;width:105.50px;height:4.30px;background:#e8eaed;border-radius:3px;"></div>
<div class="r" style="left:699.70px;top:610.90px;width:31.65px;height:4.30px;background:#2d6133;border-radius:3px;"></div>
<div class="t" style="left:812.40px;top:609.35px;font-size:8.3px;font-weight:normal;color:#2f3744;font-family:'Liberation Mono',monospace;-webkit-text-stroke:0.25px #2f3744">30%</div>
<svg class="r" style="left:676.8px;top:625.7px" width="13.8" height="13.8" viewBox="0 0 20 20"><defs><clipPath id="fcgb"><circle cx="10" cy="10" r="10"/></clipPath></defs><g clip-path="url(#fcgb)"><rect width="20" height="20" fill="#2a3f8f"/><path d="M0 0 L20 20 M20 0 L0 20" stroke="#fff" stroke-width="2.4"/><path d="M0 0 L20 20 M20 0 L0 20" stroke="#d8283a" stroke-width="1"/><path d="M10 0 V20 M0 10 H20" stroke="#fff" stroke-width="3.8"/><path d="M10 0 V20 M0 10 H20" stroke="#d8283a" stroke-width="2.4"/></g></svg>
<div class="t" style="left:699.70px;top:627.74px;font-size:9.0px;font-weight:normal;color:#3a4350;font-family:'Liberation Sans',sans-serif;-webkit-text-stroke:0.25px #3a4350">United Kingdom</div>
<div class="r" style="left:699.70px;top:642.10px;width:105.50px;height:4.30px;background:#e8eaed;border-radius:3px;"></div>
<div class="r" style="left:699.70px;top:642.10px;width:21.10px;height:4.30px;background:#2d6133;border-radius:3px;"></div>
<div class="t" style="left:812.40px;top:640.55px;font-size:8.3px;font-weight:normal;color:#2f3744;font-family:'Liberation Mono',monospace;-webkit-text-stroke:0.25px #2f3744">20%</div>
<svg class="r" style="left:676.8px;top:656.9px" width="13.8" height="13.8" viewBox="0 0 20 20"><defs><clipPath id="fcbr"><circle cx="10" cy="10" r="10"/></clipPath></defs><g clip-path="url(#fcbr)"><rect width="20" height="20" fill="#3b9b3a"/><path d="M10 3.5 L17 10 L10 16.5 L3 10 Z" fill="#f2d43a"/><circle cx="10" cy="10" r="3.6" fill="#1f3f8a"/></g></svg>
<div class="t" style="left:699.70px;top:658.94px;font-size:9.0px;font-weight:normal;color:#3a4350;font-family:'Liberation Sans',sans-serif;-webkit-text-stroke:0.25px #3a4350">Brazil</div>
<div class="r" style="left:699.70px;top:673.30px;width:105.50px;height:4.30px;background:#e8eaed;border-radius:3px;"></div>
<div class="r" style="left:699.70px;top:673.30px;width:10.55px;height:4.30px;background:#2d6133;border-radius:3px;"></div>
<div class="t" style="left:812.40px;top:671.75px;font-size:8.3px;font-weight:normal;color:#2f3744;font-family:'Liberation Mono',monospace;-webkit-text-stroke:0.25px #2f3744">10%</div>
<svg class="r" style="left:676.8px;top:688.1px" width="13.8" height="13.8" viewBox="0 0 20 20"><defs><clipPath id="fcca"><circle cx="10" cy="10" r="10"/></clipPath></defs><g clip-path="url(#fcca)"><rect width="20" height="20" fill="#ffffff"/><rect width="5" height="20" fill="#d8283a"/><rect x="15" width="5" height="20" fill="#d8283a"/><path d="M10 5 L12 9 L14 8 L13 12 L10 13 L7 12 L6 8 L8 9 Z" fill="#d8283a"/></g></svg>
<div class="t" style="left:699.70px;top:690.14px;font-size:9.0px;font-weight:normal;color:#3a4350;font-family:'Liberation Sans',sans-serif;-webkit-text-stroke:0.25px #3a4350">Canada</div>
<div class="r" style="left:699.70px;top:704.50px;width:105.50px;height:4.30px;background:#e8eaed;border-radius:3px;"></div>
<div class="r" style="left:699.70px;top:704.50px;width:5.27px;height:4.30px;background:#2d6133;border-radius:3px;"></div>
<div class="t" style="left:812.40px;top:702.95px;font-size:8.3px;font-weight:normal;color:#2f3744;font-family:'Liberation Mono',monospace;-webkit-text-stroke:0.25px #2f3744">5%</div>
</body></html>
